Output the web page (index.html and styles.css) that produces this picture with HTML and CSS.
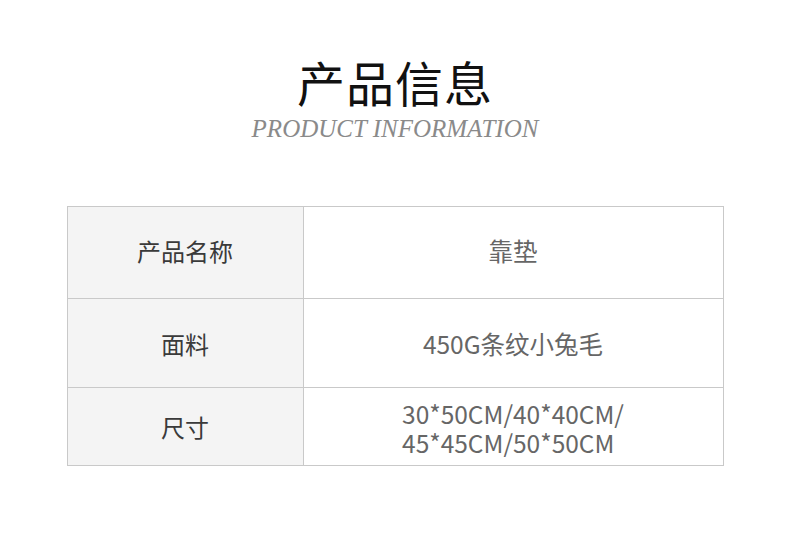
FILE: index.html
```html
<!DOCTYPE html>
<html lang="zh">
<head>
<meta charset="utf-8">
<link rel="stylesheet" href="styles.css">
</head>
<body>
<div class="page">
  <header class="head">
    <h1 class="title">产品信息</h1>
    <p class="subtitle">PRODUCT INFORMATION</p>
  </header>
  <table class="info">
    <tr class="r1"><th>产品名称</th><td>靠垫</td></tr>
    <tr class="r2"><th>面料</th><td>450G条纹小兔毛</td></tr>
    <tr class="r3"><th>尺寸</th><td><span class="multi">30*50CM/40*40CM/<br>45*45CM/50*50CM</span></td></tr>
  </table>
</div>
</body>
</html>
```
FILE: styles.css
```css
html, body { margin: 0; padding: 0; background: #fff; }
.page { width: 790px; height: 535px; font-family: "Noto Sans CJK SC", "Noto Sans", sans-serif; }
.head { padding-top: 52px; text-align: center; }
.title { margin: 0; font-size: 48px; line-height: 58px; font-weight: 400; color: #111; letter-spacing: 1px; }
.subtitle { margin: 5px 0 0; font-family: "Liberation Serif", serif; font-style: italic; font-size: 25px; line-height: 28px; color: #8a8a8a; }
.info { margin: 63px auto 0; width: 657px; border-collapse: collapse; }
.info th, .info td { border: 1px solid #c9c9c9; text-align: center; padding: 0; }
.info th { width: 235px; background: #f4f4f4; font-weight: 400; font-size: 24px; color: #3a3a3a; }
.info td { font-size: 24.5px; color: #666; }
.r1 th, .r1 td { padding-bottom: 4px; }
.r1 { height: 92px; }
.r2 { height: 89px; }
.r3 { height: 78px; }
.multi { display: inline-block; text-align: left; line-height: 29px; padding-top: 6px; }
```
